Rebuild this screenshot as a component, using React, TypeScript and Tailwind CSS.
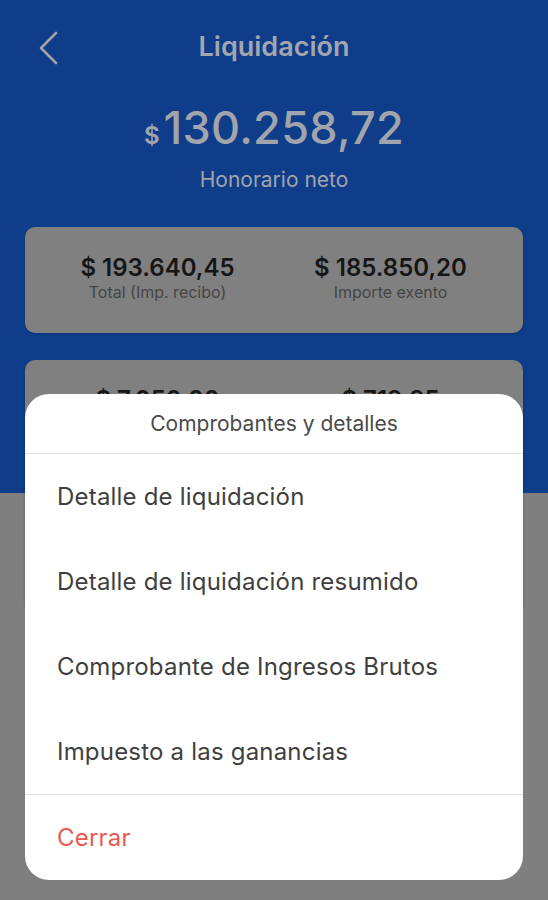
const items = [
  "Detalle de liquidación",
  "Detalle de liquidación resumido",
  "Comprobante de Ingresos Brutos",
  "Impuesto a las ganancias",
];

function Amount({ value, label }: { value: string; label: string }) {
  return (
    <div className="flex flex-col items-center">
      <span className="text-[24px] leading-[28px] font-semibold text-[#161616]">$ {value}</span>
      <span className="text-[16px] leading-[20px] text-[#454545]">{label}</span>
    </div>
  );
}

export default function App() {
  return (
    <div className="relative h-[900px] w-full overflow-hidden bg-[linear-gradient(to_bottom,#0f3d89_493px,#7f7f7f_493px)] font-['Inter','Roboto',sans-serif]">
      <div className="flex flex-col px-[25px]">
        <div className="relative flex h-[56px] mt-[19px] items-center justify-center">
          <svg
            className="absolute left-[14px] top-[12px]"
            width="20"
            height="34"
            viewBox="0 0 20 34"
            fill="none"
            stroke="#9fa3ab"
            strokeWidth="2.6"
            strokeLinecap="round"
            strokeLinejoin="round"
          >
            <polyline points="17,2 2,17 17,32" />
          </svg>
          <h1 className="text-[27px] font-semibold text-[#a2a6ae]">Liquidación</h1>
        </div>

        <div className="mt-[27px] flex items-baseline justify-center text-[#a0a4ac]">
          <span className="mr-[4px] text-[24px] font-semibold">$</span>
          <span className="text-[45px] leading-[52px] font-medium tracking-[0.3px]">130.258,72</span>
        </div>
        <p className="mt-[12px] text-center text-[21px] leading-[28px] text-[#a0a4ac]">Honorario neto</p>

        <div className="mt-[33px] grid h-[106px] grid-cols-2 rounded-[10px] bg-[#808080] px-[16px] pt-[27px] shadow-sm">
          <Amount value="193.640,45" label="Total (Imp. recibo)" />
          <Amount value="185.850,20" label="Importe exento" />
        </div>

        <div className="mt-[27px] grid h-[252px] grid-cols-2 content-start gap-y-[40px] rounded-[10px] bg-[#808080] px-[16px] pt-[26px] shadow-[0_2px_3px_rgba(0,0,0,0.25)]">
          <Amount value="7.050,00" label="Retenciones" />
          <Amount value="719,95" label="Ingresos Brutos" />
          <Amount value="0,00" label="Ganancias" />
          <Amount value="0,00" label="Otros" />
        </div>
      </div>

      <div className="absolute bottom-[20px] left-[25px] right-[25px] overflow-hidden rounded-[24px] bg-white">
        <div className="flex h-[60px] items-center justify-center border-b border-[#e2e2e2]">
          <span className="text-[21px] text-[#4a4a4a]">Comprobantes y detalles</span>
        </div>
        {items.map((item) => (
          <div key={item} className="flex h-[85px] items-center pl-[32px]">
            <span className="text-[24px] tracking-[0.2px] text-[#3f3f3f]">{item}</span>
          </div>
        ))}
        <div className="flex h-[86px] items-center border-t border-[#e2e2e2] pl-[32px]">
          <span className="text-[24px] tracking-[0.2px] text-[#e85a52]">Cerrar</span>
        </div>
      </div>
    </div>
  );
}
